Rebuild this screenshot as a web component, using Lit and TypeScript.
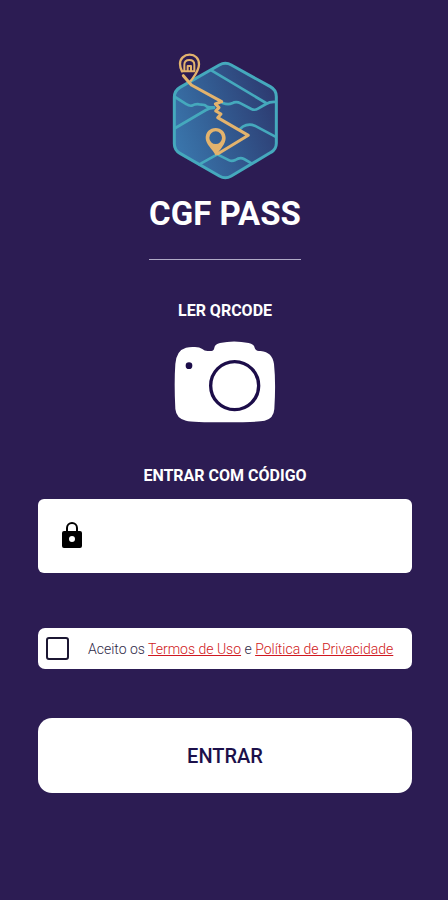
import { LitElement, html, css, svg } from "lit";
import { customElement } from "lit/decorators.js";

const logo = svg`
  <defs>
    <linearGradient id="hex" x1="0" y1="0.7" x2="1" y2="0.3">
      <stop offset="0" stop-color="#3a76ac" />
      <stop offset="0.5" stop-color="#32598f" />
      <stop offset="1" stop-color="#2d3a70" />
    </linearGradient>
  </defs>
  <path d="M178 60Q196 50 214 60L331 125Q349 135 349 155V295Q349 313 333 322L214 393Q196 404 178 393L60 325Q43 315 43 296V157Q43 137 60 127Z"
    fill="url(#hex)" stroke="#45a9bd" stroke-width="9" />
  <g fill="none" stroke="#45a9bd" stroke-width="8" stroke-linejoin="round" stroke-linecap="round">
    <path d="M154 76L318 174" />
    <path d="M45 156L80 178Q86 183 96 182Q106 176 118 178L134 180Q142 188 152 187H162" />
    <path d="M46 249L138 195Q148 189 162 189" />
    <path d="M188 174Q204 180 216 175Q228 168 242 175L274 192Q284 197 294 191L318 177Q330 170 346 171" />
    <path d="M240 252L248 245Q266 235 284 242L346 275" />
    <path d="M118 358L172 328L208 346Q216 350 226 345Q240 336 252 342L276 356" />
  </g>
  <g fill="none" stroke="#e3b36d" stroke-width="9" stroke-linejoin="round" stroke-linecap="round">
    <path d="M70 92L94 120L185 170L166 177L177 188L167 198L183 207L173 218L265 271L174 326" />
    <path d="M93 107C104 92 117 78 117 58C117 40 105 29 89 29C72 29 60 41 60 56C60 66 62 72 66 79" stroke-width="7" />
    <path d="M66 79H103V59Q103 45 88 45Q73 45 73 59V78M83 77V63H93V77" stroke-width="6" />
  </g>
  <path fill="#e3b36d" fill-rule="evenodd"
    d="M167 249C149 249 137 262 137 279C137 298 158 312 168 333C180 312 197 298 197 279C197 262 184 249 167 249ZM167 259A19 19 0 1 1 167 297A19 19 0 1 1 167 259Z" />
`;

@customElement("app-root")
export class AppRoot extends LitElement {
  static styles = css`
    :host {
      display: block;
      min-height: 100vh;
      background: #2c1c53;
      font-family: Roboto, "Liberation Sans", sans-serif;
      color: #fff;
    }
    *, *::before {
      box-sizing: border-box;
    }
    form {
      display: flex;
      flex-direction: column;
      align-items: center;
      padding: 52px 36px 0 38px;
    }
    .logo {
      width: 108px;
      height: 128px;
    }
    h1 {
      margin: 14px 0 0;
      padding-bottom: 25px;
      border-bottom: 1px solid #b0aac6;
      font-size: 33px;
      line-height: 40px;
      font-weight: 700;
    }
    .label {
      font-size: 16px;
      line-height: 20px;
      font-weight: 700;
    }
    .scan {
      display: flex;
      flex-direction: column;
      align-items: center;
      gap: 20px;
      margin: 41px 0 0;
      padding: 0;
      border: 0;
      background: none;
      color: inherit;
      font-family: inherit;
    }
    .camera {
      width: 102px;
      height: 82px;
    }
    .code-label {
      margin: 43px 0 13px;
    }
    .code {
      display: flex;
      align-items: center;
      gap: 16px;
      width: 100%;
      height: 74px;
      padding: 0 21px;
      border-radius: 6px;
      background: #fff;
    }
    .lock {
      flex: none;
      width: 26px;
      height: 28px;
    }
    .code input {
      flex: 1;
      min-width: 0;
      height: 48px;
      border: 0;
      outline: 0;
      background: none;
      color: #2c1c53;
      font: 20px Roboto, sans-serif;
    }
    .terms {
      display: flex;
      align-items: center;
      gap: 19px;
      width: 100%;
      min-height: 41px;
      margin-top: 55px;
      padding: 0 8px;
      border-radius: 7px;
      background: #fff;
      color: #2f2948;
      font-size: 14px;
      line-height: 20px;
      font-weight: 300;
    }
    .terms input {
      appearance: none;
      flex: none;
      width: 23px;
      height: 23px;
      margin: 0;
      border: 2px solid #1c1733;
      border-radius: 3px;
    }
    .terms input:checked {
      background: #2c1c53;
    }
    .terms a {
      color: #d01820;
    }
    .enter {
      width: 100%;
      height: 75px;
      margin: 49px 0 32px;
      border: 0;
      border-radius: 14px;
      background: #fff;
      color: #1c104a;
      font: 500 20px Roboto, sans-serif;
    }
  `;

  render() {
    return html`
      <form @submit=${(e: Event) => e.preventDefault()}>
        <svg class="logo" viewBox="33 21 324 384" aria-hidden="true">${logo}</svg>
        <h1>CGF PASS</h1>
        <button class="scan" type="button">
          <span class="label">LER QRCODE</span>
          <svg class="camera" viewBox="42 136 306 246" aria-hidden="true">
            <path fill="#fff" d="M78 156Q90 153 105 154Q119 154 127 160Q134 167 145 166H154Q162 165 163 156Q165 145 180 142Q222 133 266 142Q282 145 284 156Q286 165 297 166H302C326 168 339 182 342 205Q348 262 343 340Q341 369 314 375Q290 380 194 380Q98 380 78 375Q49 369 46 340Q42 262 46 205Q49 164 78 156Z" />
            <circle cx="224" cy="270" r="72" fill="none" stroke="#1c0d49" stroke-width="10" />
            <circle cx="87" cy="210" r="10" fill="#1c0d49" />
          </svg>
        </button>
        <label class="label code-label" for="code">ENTRAR COM CÓDIGO</label>
        <div class="code">
          <svg class="lock" viewBox="0 0 26 28" aria-hidden="true">
            <path d="M8 10V6A5 5 0 0 1 18 6V10" fill="none" stroke="#000" stroke-width="2" />
            <path fill="#000" fill-rule="evenodd" d="M5 9H21Q23 9 23 11V24Q23 26 21 26H5Q3 26 3 24V11Q3 9 5 9ZM13 14A3 3 0 1 0 13 20A3 3 0 1 0 13 14Z" />
          </svg>
          <input id="code" type="text" autocomplete="off" />
        </div>
        <div class="terms">
          <input id="accept" type="checkbox" />
          <label for="accept">Aceito os <a href="#termos">Termos de Uso</a> e <a href="#privacidade">Política de Privacidade</a></label>
        </div>
        <button class="enter" type="submit">ENTRAR</button>
      </form>
    `;
  }
}
